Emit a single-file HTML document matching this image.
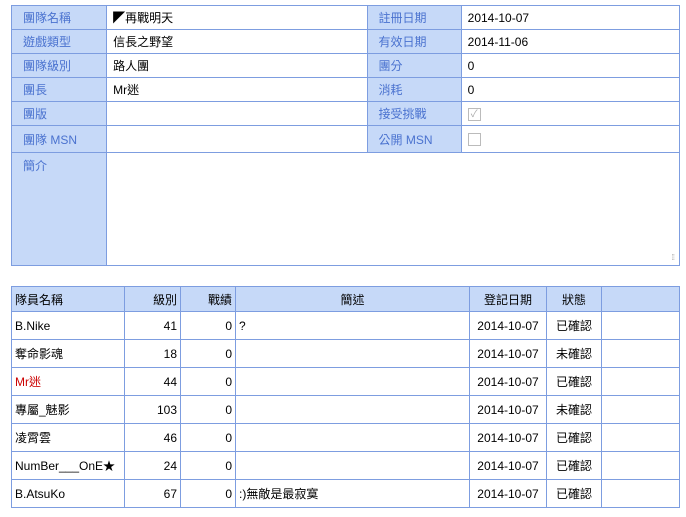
<!DOCTYPE html>
<html><head><meta charset="utf-8"><style>
body{margin:0;width:686px;height:517px;background:#fff;font-family:"Liberation Sans","Noto Sans CJK TC",sans-serif;font-size:12px;color:#000;position:relative;overflow:hidden}
table{border-collapse:collapse;position:absolute;table-layout:fixed}
td{border:1px solid #7d9de0;padding:0 0 0 6px;white-space:nowrap}
.l{background:#c6d9f8;color:#4a72cf;padding-left:11px}
.t1{left:11px;top:5px;width:669px}
.t1 td{height:23px}
.t2{left:11px;top:286px;width:669px}
.t2 td{height:27px;padding:0 3px}
.t2 tr.h td{background:#c6d9f8;height:24px}
.r{text-align:right}.c{text-align:center}
.cb{display:inline-block;width:11px;height:11px;border:1px solid #bbb;vertical-align:middle;font-size:10px;line-height:11px;color:#aaa;text-align:center}
</style></head><body>
<table class="t1">
<colgroup><col style="width:95px"><col style="width:260px"><col style="width:94px"><col style="width:218px"></colgroup>
<tr><td class="l">團隊名稱</td><td>◤再戰明天</td><td class="l">註冊日期</td><td>2014-10-07</td></tr>
<tr><td class="l">遊戲類型</td><td>信長之野望</td><td class="l">有效日期</td><td>2014-11-06</td></tr>
<tr><td class="l">團隊級別</td><td>路人團</td><td class="l">團分</td><td>0</td></tr>
<tr><td class="l">團長</td><td>Mr迷</td><td class="l">消耗</td><td>0</td></tr>
<tr><td class="l">團版</td><td></td><td class="l">接受挑戰</td><td><span class="cb">✓</span></td></tr>
<tr><td class="l" style="height:26px">團隊 MSN</td><td></td><td class="l">公開 MSN</td><td><span class="cb"></span></td></tr>
<tr><td class="l" style="height:108px;vertical-align:top;padding-top:4px">簡介</td><td colspan="3" style="position:relative"><span style="position:absolute;right:5px;bottom:3px;font-size:8px;color:#aaa;letter-spacing:-1px">⁞⁞</span></td></tr>
</table>
<table class="t2">
<colgroup><col style="width:113px"><col style="width:56px"><col style="width:55px"><col style="width:234px"><col style="width:77px"><col style="width:55px"><col style="width:78px"></colgroup>
<tr class="h"><td>隊員名稱</td><td class="r">級別</td><td class="r">戰績</td><td class="c">簡述</td><td class="c">登記日期</td><td class="c">狀態</td><td></td></tr>
<tr><td>B.Nike</td><td class="r">41</td><td class="r">0</td><td>?</td><td class="c">2014-10-07</td><td class="c">已確認</td><td></td></tr>
<tr><td>奪命影魂</td><td class="r">18</td><td class="r">0</td><td></td><td class="c">2014-10-07</td><td class="c">未確認</td><td></td></tr>
<tr><td style="color:#c00">Mr迷</td><td class="r">44</td><td class="r">0</td><td></td><td class="c">2014-10-07</td><td class="c">已確認</td><td></td></tr>
<tr><td>專屬_魅影</td><td class="r">103</td><td class="r">0</td><td></td><td class="c">2014-10-07</td><td class="c">未確認</td><td></td></tr>
<tr><td>凌霄雲</td><td class="r">46</td><td class="r">0</td><td></td><td class="c">2014-10-07</td><td class="c">已確認</td><td></td></tr>
<tr><td>NumBer___OnE★</td><td class="r">24</td><td class="r">0</td><td></td><td class="c">2014-10-07</td><td class="c">已確認</td><td></td></tr>
<tr><td>B.AtsuKo</td><td class="r">67</td><td class="r">0</td><td>:)無敵是最寂寞</td><td class="c">2014-10-07</td><td class="c">已確認</td><td></td></tr>
</table>
</body></html>
